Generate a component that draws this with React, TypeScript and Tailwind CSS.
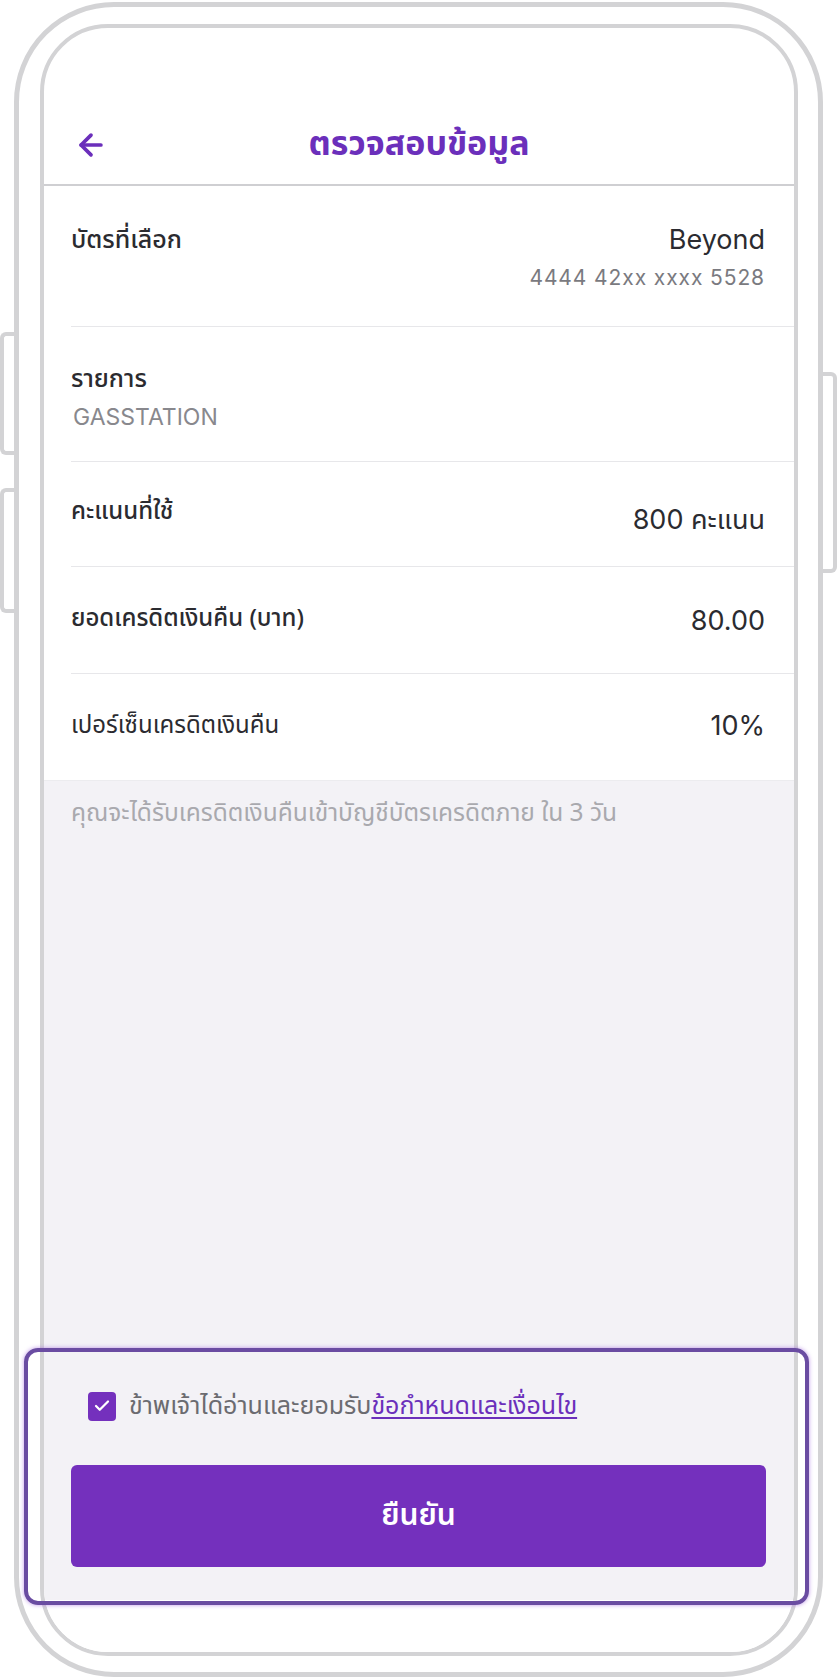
import { ArrowLeft, Check } from "lucide-react";

const thai = { fontFamily: '"Noto Sans Thai", "Noto Sans", "Liberation Sans", sans-serif' };
const latin = "font-['Inter','Noto_Sans_Thai',sans-serif]";

export default function App() {
  return (
    <div
      className="relative w-[837px] h-[1680px] bg-white overflow-hidden flex"
      style={thai}
    >
      {/* left side buttons */}
      <div className="w-[14px] flex flex-col">
        <div className="mt-[332px] h-[123px] border-l-[4px] border-y-[4px] border-[#d3d3d5] rounded-l-[6px]" />
        <div className="mt-[33px] h-[125px] border-l-[4px] border-y-[4px] border-[#d3d3d5] rounded-l-[6px]" />
      </div>

      {/* phone frame */}
      <div className="mt-[2px] w-[809px] h-[1675px] border-[5px] border-[#d3d3d5] rounded-[100px] pt-[17px] pl-[21px]">
        <div className="w-[758px] h-[1632px] border-[4px] border-[#d3d3d5] rounded-[68px] overflow-hidden bg-white flex flex-col">
          {/* header */}
          <div className="h-[156px] flex flex-col justify-end">
            <div className="h-[78px] relative flex items-center justify-center">
              <ArrowLeft
                className="absolute left-[30px] top-[22px] w-[34px] h-[34px] text-[#6b2fbb]"
                strokeWidth={2.6}
              />
              <h1 className="text-[34px] leading-[40px] font-bold text-[#6b2fbb]">
                ตรวจสอบข้อมูล
              </h1>
            </div>
          </div>
          <div className="h-[2px] bg-[#cfcfd2]" />

          {/* selected card */}
          <div className="h-[140px] pl-[27px] pr-[29px] pt-[38px] flex justify-between items-start">
            <span className="text-[25px] leading-[32px] font-medium text-[#2b2b30]">บัตรที่เลือก</span>
            <div className={`flex flex-col items-end ${latin}`}>
              <span className="text-[27px] leading-[32px] text-[#2b2b30]">Beyond</span>
              <span className="mt-[9px] text-[21px] leading-[26px] text-[#7a7a80] tracking-[0.9px]">
                4444 42xx xxxx 5528
              </span>
            </div>
          </div>
          <div className="ml-[27px] h-px bg-[#e7e7ea]" />

          {/* merchant */}
          <div className="h-[134px] pl-[27px] pr-[29px] pt-[36px] flex flex-col">
            <span className="text-[25px] leading-[32px] font-medium text-[#2b2b30]">รายการ</span>
            <span className={`mt-[8px] ml-[2px] text-[23px] leading-[28px] text-[#88888d] ${latin}`}>
              GASSTATION
            </span>
          </div>
          <div className="ml-[27px] h-px bg-[#e7e7ea]" />

          <Row label="คะแนนที่ใช้" value="800 คะแนน" h="h-[104px]" pt="pt-[34px]" vt="mt-[8px]" bold />
          <div className="ml-[27px] h-px bg-[#e7e7ea]" />
          <Row label="ยอดเครดิตเงินคืน (บาท)" value="80.00" h="h-[106px]" pt="pt-[36px]" vt="mt-[2px]" bold />
          <div className="ml-[27px] h-px bg-[#e7e7ea]" />
          <Row label="เปอร์เซ็นเครดิตเงินคืน" value="10%" h="h-[106px]" pt="pt-[36px]" vt="mt-0" />

          {/* gray area */}
          <div className="h-[820px] bg-[#f3f2f6] border-t border-[#ececef] flex flex-col px-[27px]">
            <p className="mt-[18px] text-[24.5px] leading-[30px] text-[#a9a9ae]">
              คุณจะได้รับเครดิตเงินคืนเข้าบัญชีบัตรเครดิตภาย ใน 3 วัน
            </p>
            <div className="flex-1" />
            <label className="flex items-center gap-[13px] ml-[17px]">
              <span className="w-[28px] h-[29px] shrink-0 rounded-[4px] bg-[#7430bd] flex items-center justify-center">
                <Check className="w-[18px] h-[18px] text-white" strokeWidth={3} />
              </span>
              <span className="text-[25px] leading-[30px] text-[#6b6b70]">
                ข้าพเจ้าได้อ่านและยอมรับ
                <span className="text-[#6b2fbb] underline underline-offset-[3px]">
                  ข้อกำหนดและเงื่อนไข
                </span>
              </span>
            </label>
            <button className="mt-[44px] mb-[33px] h-[102px] w-[695px] rounded-[6px] bg-[#7430bd] text-white text-[30px] font-semibold">
              ยืนยัน
            </button>
          </div>
          <div className="flex-1 bg-white" />
        </div>
      </div>

      {/* right side button */}
      <div className="w-[14px] flex flex-col">
        <div className="mt-[372px] -ml-[4px] h-[201px] border-r-[4px] border-y-[4px] border-[#d3d3d5] rounded-r-[6px]" />
      </div>

      {/* highlight annotation */}
      <div className="absolute left-[24px] top-[1348px] w-[785px] h-[257px] border-[4px] border-[#6a4ca2] rounded-[14px] shadow-[0_0_4px_rgba(150,80,220,0.6)] pointer-events-none" />
    </div>
  );
}

function Row({
  label,
  value,
  h,
  pt,
  vt,
  bold,
}: {
  label: string;
  value: string;
  h: string;
  pt: string;
  vt: string;
  bold?: boolean;
}) {
  return (
    <div className={`${h} ${pt} pl-[27px] pr-[29px] flex justify-between items-start`}>
      <span className={`text-[24px] leading-[32px] text-[#2b2b30] ${bold ? "font-medium" : ""}`}>
        {label}
      </span>
      <span className={`${vt} ${latin} text-[27px] leading-[32px] text-[#2b2b30]`}>{value}</span>
    </div>
  );
}
